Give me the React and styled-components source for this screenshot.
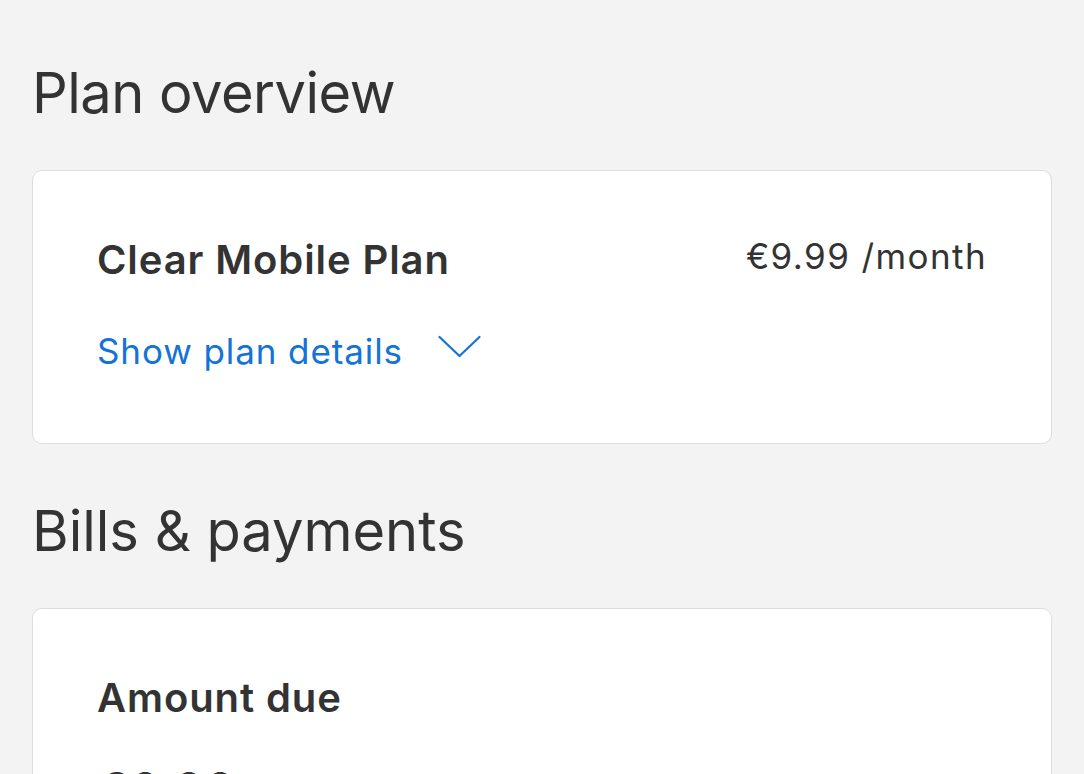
import React from "react";
import styled, { createGlobalStyle } from "styled-components";

const Global = createGlobalStyle`
  html, body {
    margin: 0;
    padding: 0;
    background: #f3f3f3;
  }
  body {
    font-family: Inter, "Liberation Sans", Arial, sans-serif;
    color: #333333;
    -webkit-font-smoothing: antialiased;
  }
`;

const Page = styled.main`
  padding: 0 32px;
  height: 774px;
  overflow: hidden;
  box-sizing: border-box;
`;

const SectionTitle = styled.h2`
  margin: ${(p) => p.$top}px 0 43px;
  font-size: 56px;
  line-height: 68px;
  font-weight: 400;
  letter-spacing: ${(p) => p.$spacing}px;
  color: #333333;
`;

const Card = styled.section`
  background: #ffffff;
  border: 1px solid #dddddd;
  border-radius: 10px;
  padding: 65px 64px 68px 64px;
`;

const Row = styled.div`
  display: flex;
  justify-content: space-between;
  align-items: flex-start;
`;

const CardTitle = styled.h3`
  margin: 0;
  font-size: 40px;
  line-height: 48px;
  font-weight: 600;
  letter-spacing: 0.9px;
  color: #333333;
`;

const Price = styled.span`
  font-size: 35px;
  line-height: 40px;
  font-weight: 400;
  letter-spacing: 1.4px;
  color: #333333;
`;

const DetailsButton = styled.button`
  display: flex;
  align-items: center;
  gap: 35px;
  margin-top: 43px;
  padding: 0;
  border: none;
  background: none;
  font-family: inherit;
  font-size: 35px;
  line-height: 48px;
  font-weight: 400;
  letter-spacing: 0.9px;
  color: #1473d6;
  cursor: pointer;
`;

const Chevron = styled.svg`
  width: 43px;
  height: 24px;
  flex: none;
  margin-top: -8px;
`;

const Amount = styled.div`
  margin-top: 40px;
  font-size: 48px;
  line-height: 56px;
  font-weight: 400;
  letter-spacing: 1px;
  color: #333333;
`;

export default function App() {
  return (
    <>
      <Global />
      <Page>
        <SectionTitle $top={59} $spacing={-0.5}>Plan overview</SectionTitle>
        <Card>
          <Row>
            <CardTitle>Clear Mobile Plan</CardTitle>
            <Price>€9.99 /month</Price>
          </Row>
          <DetailsButton>
            Show plan details
            <Chevron viewBox="0 0 43 24" fill="none">
              <polyline
                points="1.5,2 21.5,21 41.5,2"
                stroke="#1473d6"
                strokeWidth="2.2"
                strokeLinecap="round"
                strokeLinejoin="round"
              />
            </Chevron>
          </DetailsButton>
        </Card>
        <SectionTitle $top={53} $spacing={0}>Bills &amp; payments</SectionTitle>
        <Card>
          <CardTitle>Amount due</CardTitle>
          <Amount>€0.00</Amount>
        </Card>
      </Page>
    </>
  );
}
